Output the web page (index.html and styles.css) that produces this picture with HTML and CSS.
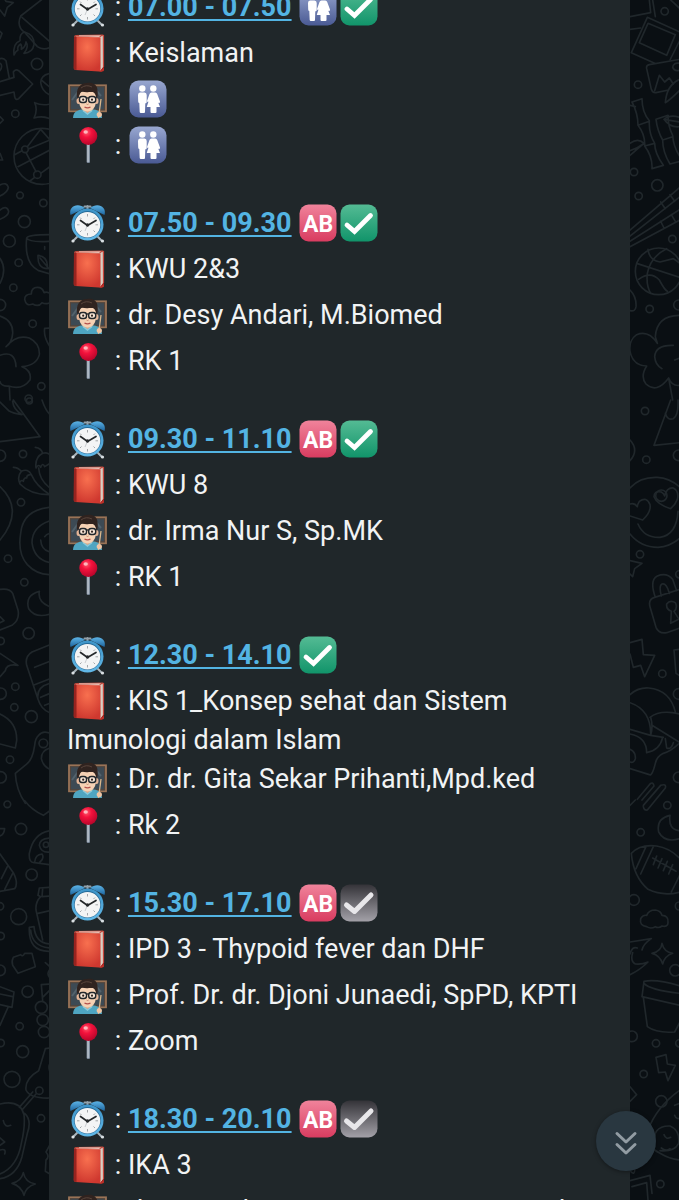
FILE: index.html
```html
<!DOCTYPE html>
<html lang="id">
<head>
  <meta charset="UTF-8">
  <title>Jadwal Kuliah</title>
  <meta name="viewport" content="width=device-width, initial-scale=1.0">
  <link rel="stylesheet" href="styles.css">
</head>
<body>
  <!-- emoji set -->
  <svg class="defs" aria-hidden="true">
    <defs>
      <linearGradient id="gGreen" x1="0" y1="0" x2="0" y2="1"><stop offset="0" stop-color="#54bb94"/><stop offset="1" stop-color="#11946a"/></linearGradient>
      <linearGradient id="gPink" x1="0" y1="0" x2="0" y2="1"><stop offset="0" stop-color="#f0839b"/><stop offset="1" stop-color="#d93c60"/></linearGradient>
      <linearGradient id="gGray" x1="0" y1="0" x2="0" y2="1"><stop offset="0" stop-color="#343338"/><stop offset="1" stop-color="#a3a1a8"/></linearGradient>
      <linearGradient id="gBlue" x1="0" y1="0" x2="0" y2="1"><stop offset="0" stop-color="#98a7d0"/><stop offset="1" stop-color="#4a5a94"/></linearGradient>
      <linearGradient id="gBell" x1="0" y1="0" x2="0" y2="1"><stop offset="0" stop-color="#5db4e6"/><stop offset="1" stop-color="#1d659f"/></linearGradient>
      <linearGradient id="gRing" x1="0" y1="0" x2="0" y2="1"><stop offset="0" stop-color="#3c93c8"/><stop offset="1" stop-color="#62b9e8"/></linearGradient>
      <radialGradient id="gBook" cx="0.5" cy="0.3" r="0.7"><stop offset="0" stop-color="#f8704f"/><stop offset="1" stop-color="#cf382f"/></radialGradient>
      <radialGradient id="gPin" cx="0.4" cy="0.3" r="0.7"><stop offset="0" stop-color="#ff5a6c"/><stop offset="0.4" stop-color="#f3123c"/><stop offset="1" stop-color="#b8052b"/></radialGradient>

      <symbol id="clock" viewBox="0 0 41 46">
        <path d="M10 37 L6 41 M31 37 L35 41" stroke="#a9b4bb" stroke-width="2" stroke-linecap="round"/>
        <circle cx="6" cy="41" r="1.6" fill="#d9dfe2"/><circle cx="35.500" cy="41" r="1.600" fill="#d9dfe2"/>
        <path d="M20.500 9 V6 M17.500 6.500 H23.500" stroke="#93a1aa" stroke-width="2" stroke-linecap="round"/>
        <path d="M3.500 15 C1 6 11 2 18 8 Z" fill="url(#gBell)"/>
        <path d="M37.500 15 C40 6 30 2 23 8 Z" fill="url(#gBell)"/>
        <circle cx="20.500" cy="24.500" r="16" fill="url(#gRing)"/>
        <circle cx="20.500" cy="24.500" r="13.400" fill="#256a98"/>
        <circle cx="20.500" cy="24.800" r="12.800" fill="#f3f4f5"/>
        <path d="M20.500 14 V16.500 M20.500 33 V35.500 M10 24.800 H12.500 M28.500 24.800 H31 M13 17.500 L14.500 19 M28 17.500 L26.500 19 M13 32 L14.500 30.500 M28 32 L26.500 30.500" stroke="#a4a7aa" stroke-width="1"/>
        <path d="M13.500 20.500 L20.500 25.500 L29 20.500" fill="none" stroke="#25282b" stroke-width="1.700" stroke-linecap="round"/>
        <path d="M20.500 25 L18 31" stroke="#c9ccd0" stroke-width="1"/>
        <circle cx="20.500" cy="25" r="1.700" fill="#25282b"/>
      </symbol>

      <symbol id="book" viewBox="0 0 41 46">
        <path d="M33 38 L37 36 V40 L33.500 42 Z" fill="#9f201c"/>
        <path d="M9 5 L36 5 L36 37 L33 41 L9 38 Z" fill="#e9dcd2"/>
        <path d="M34 7 L33.500 39 M35.500 6 L35 38" stroke="#b9a9a0" stroke-width="0.600"/>
        <path d="M7 7 Q7 5 9 5 L35.500 4.500 L37 5 L32.500 7.500 L10 6.500 Z" fill="#bd4a3d"/>
        <path d="M12 5.500 L34 5.500 L32 6.800 L12 6.300 Z" fill="#f3e6dc"/>
        <path d="M9 6.500 L33.500 7.500 V40.500 Q33.500 41.800 32 41.600 L8.500 40 Q7 39.800 7 38.500 L7 8 Q7 6.500 9 6.500 Z" fill="url(#gBook)"/>
        <path d="M7 7 L9.500 7 L9.500 40 L8 39.800 Q6.500 39.500 6.500 38 Z" fill="#97231f"/>
        <path d="M36.500 5 V37" stroke="#c8453b" stroke-width="1.200"/>
        <path d="M33 41.500 L36.800 38 V41 L33.500 42 Z" fill="#c33129"/>
      </symbol>

      <symbol id="teacher" viewBox="0 0 41 46">
        <rect x="2" y="9.300" width="37" height="26" fill="#3d4a54" stroke="#9a7356" stroke-width="1.800"/>
        <rect x="3.500" y="10.800" width="34" height="23" fill="none" stroke="#5d4433" stroke-width="0.800"/>
        <path d="M5 24 L13 13 M28 13 L34 20" stroke="#53626c" stroke-width="2"/>
        <path d="M6 42 C6 35 12 34 16 33 L25 33 C30 34 35 35 35 42 Z" fill="#4fa5c1"/>
        <path d="M15 32 L16 35 Q20.500 39 25 35 L26 32 Z" fill="#dba988"/>
        <path d="M16 34.500 L20.500 38 L25 34.500" fill="none" stroke="#89cadb" stroke-width="1.400"/>
        <ellipse cx="11.500" cy="25" rx="2" ry="3" fill="#e4b597"/><ellipse cx="29.500" cy="25" rx="2" ry="3" fill="#e4b597"/>
        <path d="M12 18 Q20 10 29 18 V26 Q28 35 20.500 35.500 Q13 35 12 26 Z" fill="#f5d1b4"/>
        <path d="M10.500 23 C8 13 13 7 20 7 C25 6 30 8 30.500 14 C31 18 30.500 21 30 23 L28.500 19 C27 15 25 16 22 16 C17 17 14 14 13 18 Z" fill="#30231f"/>
        <path d="M14 12 Q19 8 25 11" fill="none" stroke="#58443b" stroke-width="1"/>
        <g fill="#f7e5d6" stroke="#20262b" stroke-width="1.400"><rect x="12.500" y="20.500" width="7" height="6" rx="2.500"/><rect x="21.700" y="20.500" width="7" height="6" rx="2.500"/><path d="M19.500 22 H21.700"/></g>
        <circle cx="16.200" cy="23.700" r="1.100" fill="#30231f"/><circle cx="25" cy="23.700" r="1.100" fill="#30231f"/>
        <path d="M19.500 28 Q20.500 29 21.600 28" stroke="#c58a6e" stroke-width="1" fill="none"/>
        <path d="M17.500 31 Q20.500 32.800 23.500 31" fill="none" stroke="#b44f4b" stroke-width="1.300"/>
        <path d="M34 23 L31.500 42" stroke="#dab78d" stroke-width="1.300"/>
        <circle cx="32.300" cy="38.500" r="2.600" fill="#efc4a3"/>
      </symbol>

      <symbol id="pin" viewBox="0 0 41 46">
        <rect x="19.600" y="21" width="3.400" height="20" rx="1.300" fill="#7c8a9a"/>
        <rect x="20.400" y="22" width="1.300" height="18" rx="0.600" fill="#c5ccd6"/>
        <circle cx="21.300" cy="14" r="9" fill="url(#gPin)"/>
        <ellipse cx="18.700" cy="10" rx="2.200" ry="1.800" fill="#ffb7bd"/>
      </symbol>

      <symbol id="restroom" viewBox="0 0 41 46">
        <rect x="1.500" y="4.500" width="37" height="37" rx="9" fill="url(#gBlue)"/>
        <g fill="#fff">
          <circle cx="14.300" cy="12.500" r="3.200"/>
          <path d="M12 16.500 H16.500 Q18.700 16.500 18.700 19 V26 Q18.700 27.300 17.800 27.300 L17.300 27.300 L17 36 Q17 37 16 37 H12.800 Q11.800 37 11.700 36 L11.300 27 Q10.300 27 10.200 25.500 L10 19 Q10 16.500 12 16.500 Z"/>
          <circle cx="25.300" cy="12.500" r="3.200"/>
          <path d="M23.500 16.500 H27.200 Q28.700 16.500 29.200 18 L32 25.500 Q32.300 27 30.800 27 L30.200 26.500 L32 31 H28.500 V36 Q28.500 37 27.500 37 H23.500 Q22.500 37 22.500 36 V31 H18.700 L20.500 25.500 Q19.500 26.500 19 25 L21.500 18 Q22 16.500 23.500 16.500 Z"/>
        </g>
      </symbol>

      <symbol id="check" viewBox="0 0 41 46">
        <rect x="1.500" y="4.500" width="37" height="37" rx="9" fill="url(#gGreen)"/>
        <path d="M8 25 L15.500 31.500 L31.500 15.500" fill="none" stroke="#fff" stroke-width="4.800" stroke-linecap="round"/>
      </symbol>
      <symbol id="checkGray" viewBox="0 0 41 46">
        <rect x="1.500" y="4.500" width="37" height="37" rx="9" fill="url(#gGray)"/>
        <path d="M7.500 25 L15.500 31.500 L32 15" fill="none" stroke="#e8e7ea" stroke-width="5" stroke-linecap="round" stroke-linejoin="round"/>
      </symbol>
      <symbol id="ab" viewBox="0 0 41 46">
        <rect x="1.500" y="4.500" width="37" height="37" rx="9" fill="url(#gPink)"/>
        <text x="20" y="31.500" text-anchor="middle" class="ab-text">AB</text>
      </symbol>
    </defs>
  </svg>

  <main class="chat">
    <!-- wallpaper, left strip -->
    <svg class="wallpaper" viewBox="0 0 147 3600" aria-hidden="true">
      <path d="M0 30 L14 48 L22 22 L40 8 L18 4 L10 -10"/>
      <path d="M130 -5 L62 48 Q48 80 75 98 L112 140 Q130 152 150 142 M66 52 L150 125"/>
      <path d="M42 165 Q38 130 60 122 Q58 100 74 96 Q104 104 102 134 Q98 158 72 160 Q88 140 78 126 Q76 142 64 148 Q66 136 62 132 Q50 140 54 150 Q46 154 42 165 Z"/>
      <circle cx="111" cy="192" r="17"/><circle cx="46" cy="341" r="11"/>
      <path d="M150 220 Q122 225 122 248 Q126 275 150 285 M124 240 L150 262"/>
      <path d="M0 245 L42 232 L40 216 Q46 206 56 212 L98 252 L56 296 Q46 302 44 290 L42 276 L0 286 M28 236 L18 182 Q10 172 0 176 M0 190 Q10 196 0 212"/>
      <path d="M104 308 Q114 330 102 354 Q126 346 150 356 M104 308 Q126 318 150 312 M0 350 L10 360 L0 370 M0 460 L8 480 L0 480 M0 94 L6 100 L0 116"/>
      <circle cx="126" cy="469" r="84"/><circle cx="75" cy="448" r="10"/><circle cx="112" cy="524" r="11"/>
      <path d="M82 440 L122 388 M85 447 L150 420 M66 452 L44 464 M78 458 L108 515 M54 500 L150 450 M122 520 L150 500 M104 532 L90 543 M122 388 L150 420"/>
      <path d="M0 555 Q20 545 25 562 Q24 576 0 588 M0 630 Q20 614 26 634 Q26 648 0 658"/>
      <circle cx="60" cy="586" r="10"/><circle cx="130" cy="609" r="11"/><circle cx="73" cy="665" r="18"/><circle cx="28" cy="723" r="18"/><circle cx="56" cy="788" r="11"/><circle cx="40" cy="863" r="11"/><circle cx="0" cy="915" r="17"/><circle cx="98" cy="971" r="11"/><circle cx="124" cy="1159" r="11"/><circle cx="86" cy="1196" r="11"/>
      <path d="M150 704 Q84 704 80 714 Q86 728 150 724 M80 714 Q72 790 116 812 L150 822 M114 766 Q146 770 142 806 Q112 806 114 766 M120 774 L150 810 M134 740 V748"/>
      <path d="M0 775 Q22 808 0 850"/>
      <path d="M150 880 Q140 874 132 878 Q128 862 112 862 Q94 862 94 882 Q74 882 74 898 Q78 920 98 912 Q116 922 126 908 Q136 914 150 908"/>
      <path d="M0 948 Q40 962 38 1000 Q36 1028 18 1040 Q50 1002 88 1014 Q120 1030 118 1064 Q110 1096 66 1100 Q96 1112 90 1140 Q66 1172 26 1158 Q4 1160 0 1145 M0 1066 Q46 1050 48 1100 M28 1160 L30 1200 M134 985 Q130 1010 150 1040 M150 984 L134 985"/>

      <path d="M0 1325 L120 1310 L40 1200 M0 1206 L26 1232 Q40 1240 66 1244 Q40 1228 38 1204 M126 1200 Q136 1230 150 1244"/>
      <circle cx="88" cy="1203" r="9"/><circle cx="0" cy="1367" r="17"/><circle cx="69" cy="1362" r="11"/><circle cx="63" cy="1507" r="11"/><circle cx="24" cy="1676" r="11"/><circle cx="73" cy="1747" r="11"/><circle cx="86" cy="1900" r="17"/><circle cx="2" cy="1923" r="11"/><circle cx="46" cy="2060" r="11"/><circle cx="2" cy="2081" r="17"/><circle cx="43" cy="2122" r="11"/><circle cx="94" cy="2150" r="18"/><circle cx="30" cy="2279" r="11"/><circle cx="2" cy="2332" r="17"/>
      <path d="M40 1402 Q54 1402 64 1414 Q84 1404 94 1424 Q110 1460 150 1484 M64 1414 Q50 1430 60 1452 Q90 1484 150 1484 M60 1446 Q66 1438 70 1444 Q72 1432 80 1434 Q80 1424 92 1424 M106 1342 Q124 1344 128 1360 Q104 1372 108 1404 Q116 1390 122 1402 Q128 1386 134 1400 L150 1390 M116 1404 Q118 1440 150 1464 M128 1360 Q140 1356 150 1364"/>
      <path d="M0 1460 Q74 1530 0 1620"/>
      <path d="M150 1522 Q68 1530 62 1600 Q52 1660 82 1694 Q110 1724 150 1724 M150 1562 Q96 1580 96 1628 Q102 1678 150 1688 M134 1610 Q140 1602 150 1600 M122 1620 Q124 1650 150 1656"/>
      <path d="M118 1774 Q74 1786 86 1826 Q106 1856 150 1842 M118 1774 Q112 1806 150 1820"/>
      <path d="M0 1768 Q30 1764 38 1780 L54 1830 Q60 1860 36 1876 L0 1890 M0 1850 L12 1862 L0 1868 M0 1960 L54 1996 Q20 1990 16 2012 L0 2030"/>
      <path d="M150 1934 L96 1956 Q74 1970 80 1996 L114 2098 Q124 2130 150 2138 M104 2002 L150 1984 M100 2056 L150 2036 M150 2050 Q108 2060 114 2098 M122 2092 L150 2080 M134 2116 L150 2110"/>
      <path d="M0 2142 Q52 2166 50 2222 L46 2244 L0 2232"/>
      <path d="M150 2200 Q128 2190 116 2206 Q106 2214 104 2236 Q98 2280 78 2294 L46 2320 Q48 2370 76 2410 M150 2244 Q124 2250 124 2276 Q130 2300 150 2308"/><circle cx="130" cy="2230" r="13"/>

      <circle cx="22" cy="2413" r="10"/><circle cx="63" cy="2487" r="17"/><circle cx="95" cy="2624" r="17"/><circle cx="0" cy="2719" r="11"/><circle cx="56" cy="2750" r="24"/><circle cx="2" cy="2808" r="11"/><circle cx="0" cy="2911" r="16"/><circle cx="83" cy="2975" r="17"/><circle cx="59" cy="3079" r="11"/><circle cx="2" cy="3129" r="11"/><circle cx="68" cy="3155" r="18"/><circle cx="36" cy="3238" r="24"/><circle cx="123" cy="3355" r="11"/>
      <path d="M74 2402 Q96 2430 130 2446 L150 2432 M0 2486 L14 2486 Q12 2504 0 2508"/>
      <path d="M150 2492 Q100 2500 88 2560 Q86 2590 104 2588 L150 2594 M150 2514 Q118 2516 118 2536 Q124 2560 150 2556 M104 2586 Q106 2564 126 2562 Q134 2574 120 2586"/>
      <circle cx="138" cy="2534" r="8"/>
      <path d="M0 2562 L40 2618 Q56 2650 44 2666 L0 2674 M22 2600 L4 2636 M38 2620 L14 2668"/>
      <path d="M150 2662 L118 2664 L114 2686 L122 2690 Q106 2706 108 2730 L128 2820 M128 2666 L126 2690 L150 2688 M114 2740 L150 2732 M88 2782 L102 2780 Q106 2830 150 2832 M88 2782 Q84 2856 150 2854 M92 2790 Q96 2840 150 2844"/>
      <path d="M40 2872 L62 2864 Q68 2872 74 2860 L96 2860 L106 2900 L54 2920 L38 2896 Q34 2882 40 2872 Z"/>
      <path d="M0 2960 L42 2976 L36 3022 L0 3014 M0 2982 L38 2990 M24 3022 L0 3076"/>
      <circle cx="124" cy="3022" r="18"/><circle cx="128" cy="3060" r="17"/><circle cx="132" cy="3096" r="17"/>
      <path d="M150 2952 L124 2954 L128 3002 M130 2990 L150 2970 M136 2888 L150 2900 M150 2908 Q138 2920 150 2934 M150 3144 L136 3146 L116 3212 Q74 3236 78 3270 Q90 3296 150 3294 M150 3190 Q144 3200 150 3216"/>
      <circle cx="118" cy="3272" r="11"/>
      <path d="M108 3282 L66 3330 M98 3276 L58 3322 M0 3312 Q60 3298 72 3344 Q76 3380 64 3430 Q52 3500 0 3522 M74 3340 Q96 3360 82 3400 L66 3470 Q50 3528 0 3536 M10 3362 Q14 3384 32 3376 M0 3450 Q20 3444 14 3462 M0 3414 L14 3426 L0 3436"/>
      <path d="M70 3518 Q76 3548 106 3552 Q78 3560 72 3586 Q64 3558 36 3550 Q64 3544 70 3518 Z M150 3434 L138 3456 Q150 3470 138 3480 L136 3514 L150 3522"/>
    </svg>

    <section class="bubble">
      <p>
        <svg class="emoji" role="img" aria-label="Jam"><use href="#clock"/></svg> : <a href="#">07.00 - 07.50</a> <svg class="emoji"><use href="#restroom"/></svg><svg class="emoji"><use href="#check"/></svg><br>
        <svg class="emoji"><use href="#book"/></svg> : Keislaman<br>
        <svg class="emoji"><use href="#teacher"/></svg> : <svg class="emoji"><use href="#restroom"/></svg><br>
        <svg class="emoji"><use href="#pin"/></svg> : <svg class="emoji"><use href="#restroom"/></svg>
      </p>
      <p>
        <svg class="emoji"><use href="#clock"/></svg> : <a href="#">07.50 - 09.30</a> <svg class="emoji"><use href="#ab"/></svg><svg class="emoji"><use href="#check"/></svg><br>
        <svg class="emoji"><use href="#book"/></svg> : KWU 2&amp;3<br>
        <svg class="emoji"><use href="#teacher"/></svg> : dr. Desy Andari, M.Biomed<br>
        <svg class="emoji"><use href="#pin"/></svg> : RK 1
      </p>
      <p>
        <svg class="emoji"><use href="#clock"/></svg> : <a href="#">09.30 - 11.10</a> <svg class="emoji"><use href="#ab"/></svg><svg class="emoji"><use href="#check"/></svg><br>
        <svg class="emoji"><use href="#book"/></svg> : KWU 8<br>
        <svg class="emoji"><use href="#teacher"/></svg> : dr. Irma Nur S, Sp.MK<br>
        <svg class="emoji"><use href="#pin"/></svg> : RK 1
      </p>
      <p>
        <svg class="emoji"><use href="#clock"/></svg> : <a href="#">12.30 - 14.10</a> <svg class="emoji"><use href="#check"/></svg><br>
        <svg class="emoji"><use href="#book"/></svg> : KIS 1_Konsep sehat dan Sistem Imunologi dalam Islam<br>
        <svg class="emoji"><use href="#teacher"/></svg> : Dr. dr. Gita Sekar Prihanti,Mpd.ked<br>
        <svg class="emoji"><use href="#pin"/></svg> : Rk 2
      </p>
      <p>
        <svg class="emoji"><use href="#clock"/></svg> : <a href="#">15.30 - 17.10</a> <svg class="emoji"><use href="#ab"/></svg><svg class="emoji"><use href="#checkGray"/></svg><br>
        <svg class="emoji"><use href="#book"/></svg> : IPD 3 - Thypoid fever dan DHF<br>
        <svg class="emoji"><use href="#teacher"/></svg> : Prof. Dr. dr. Djoni Junaedi, SpPD, KPTI<br>
        <svg class="emoji"><use href="#pin"/></svg> : Zoom
      </p>
      <p>
        <svg class="emoji"><use href="#clock"/></svg> : <a href="#">18.30 - 20.10</a> <svg class="emoji"><use href="#ab"/></svg><svg class="emoji"><use href="#checkGray"/></svg><br>
        <svg class="emoji"><use href="#book"/></svg> : IKA 3<br>
        <svg class="emoji"><use href="#teacher"/></svg> : dr. Husnul Asarianti, Sp.A, M.Biomed
      </p>
    </section>

    <!-- wallpaper, right strip -->
    <svg class="wallpaper" viewBox="30 0 147 3600" aria-hidden="true">
      <path d="M30 50 L92 38 L88 0 M98 0 L106 50 M152 0 L180 26 M30 88 L62 84"/>
      <path d="M82 52 L180 96 M82 52 L34 158 L104 190 M180 120 L150 180 M84 70 L166 104 L140 166 L58 128 Z"/>
      <path d="M180 178 L88 194 Q78 196 80 206 L94 268 Q98 280 108 278 L146 270 M104 272 L118 226 L134 246 L148 234 L160 252 M180 190 Q160 186 158 202 Q164 216 180 210 M180 238 Q140 254 136 308 Q150 300 180 270"/>
      <circle cx="134" cy="34" r="11"/><circle cx="54" cy="254" r="11"/><circle cx="42" cy="516" r="11"/><circle cx="112" cy="556" r="17"/><circle cx="56" cy="588" r="11"/><circle cx="157" cy="717" r="11"/><circle cx="89" cy="927" r="11"/><circle cx="176" cy="915" r="15"/>
      <path d="M36 306 L66 296 Q66 336 88 362 Q86 400 104 430 Q104 460 130 496 L96 506 Q98 470 74 438 Q76 404 54 376 Q54 340 36 306 M54 376 L88 364 M74 438 L104 430 M30 316 L46 320 M30 430 Q54 412 72 430 L30 466 M30 452 Q50 446 72 430 M108 358 L144 346 Q144 380 158 406 Q160 440 180 470 M108 358 Q112 392 128 420 Q128 456 150 492 L180 484 M128 420 L158 410 M180 352 Q150 342 132 358 Q150 384 180 380 M132 358 L180 366"/>
      <path d="M30 690 L180 562 M30 708 L180 590 M30 724 L180 628 M30 740 L180 660 M122 606 L136 626 M150 584 L164 604 M122 664 L132 684 M154 644 L166 664"/>
      <circle cx="116" cy="814" r="70"/>
      <path d="M50 790 L180 832 M84 748 Q88 782 120 786 L160 776 L180 790 M140 746 Q92 770 82 820 Q78 856 92 880 M56 838 Q92 812 118 840 Q134 870 142 874"/>
      <path d="M30 870 Q50 890 48 920 Q46 936 30 932"/>
      <path d="M180 946 Q110 946 106 1010 L112 1030 Q86 990 50 1004 Q26 1020 30 1054 Q38 1096 80 1098 Q60 1130 78 1152 Q110 1182 146 1134 L158 1200 M146 1134 Q156 1160 180 1156 M160 1036 Q106 1034 104 1070 Q106 1096 126 1106 M164 1080 L180 1074"/>

      <path d="M152 1200 L102 1336 L180 1328 M136 1240 Q142 1262 160 1256 Q176 1246 174 1200 M30 1320 Q58 1350 30 1382"/>
      <circle cx="75" cy="1233" r="11"/><circle cx="79" cy="1379" r="11"/><circle cx="176" cy="1366" r="16"/><circle cx="124" cy="1487" r="17"/><circle cx="60" cy="1663" r="11"/><circle cx="178" cy="1723" r="11"/><circle cx="127" cy="2021" r="11" transform="translate(0 0)"/><circle cx="176" cy="2082" r="16"/><circle cx="176" cy="2332" r="16"/>
      <path d="M30 1464 Q60 1430 112 1432 Q150 1434 180 1462 M30 1602 Q62 1642 114 1642 Q150 1640 180 1614"/>
      <path d="M152 1526 Q110 1512 102 1490 Q102 1472 124 1476 Q132 1480 134 1488 Q140 1462 160 1464 Q178 1474 172 1498 Q166 1514 152 1526 Z M68 1560 L30 1548 M68 1560 Q94 1536 90 1514 Q80 1488 58 1504 Q52 1514 52 1520 Q44 1508 30 1512 M54 1572 Q72 1614 120 1612 Q170 1604 174 1534"/>
      <path d="M30 1682 L66 1690 L44 1706 L38 1730 L30 1722"/>
      <path d="M106 1792 Q88 1740 112 1728 Q140 1716 158 1738 L170 1772 M124 1788 Q116 1756 126 1752 Q140 1748 148 1780 M180 1768 L104 1792 Q84 1798 90 1820 L108 1882 Q116 1902 140 1898 L180 1884 M180 1856 L152 1870 L154 1834 Q138 1828 140 1812 Q150 1798 166 1808 Q174 1824 162 1834 L176 1856"/>
      <path d="M30 1928 L66 1918 L70 1964 L104 1966 L74 2030 L62 1996 L40 2002 L30 1962 M180 1948 L162 1950 L168 2020 L180 2028"/>
      <path d="M30 2084 Q54 2062 86 2064 Q150 2070 166 2136 M30 2108 Q94 2130 92 2206 L30 2188 M90 2152 Q120 2128 180 2142 M92 2206 Q100 2180 92 2152 M92 2206 L130 2212 M96 2176 L180 2228 M30 2202 Q80 2212 80 2258 Q120 2250 128 2212 M136 2216 L140 2244 Q154 2250 160 2228 M180 2228 Q150 2256 130 2260 Q110 2270 106 2290 Q96 2330 88 2324 L30 2306 M30 2248 Q48 2256 46 2276 Q42 2290 30 2286"/>
      <path d="M52 2398 L90 2352 Q100 2344 102 2358 L66 2400 M70 2416 L122 2356 Q140 2350 136 2364 L82 2430 Q72 2432 70 2420 M30 2416 L46 2400"/>

      <circle cx="142" cy="2416" r="11"/><circle cx="62" cy="2497" r="11"/><circle cx="42" cy="2700" r="16"/><circle cx="178" cy="2718" r="12"/><circle cx="166" cy="2911" r="17"/><circle cx="36" cy="3109" r="16"/><circle cx="108" cy="3130" r="11"/><circle cx="178" cy="3130" r="11"/><circle cx="71" cy="3222" r="11"/><circle cx="124" cy="3304" r="17"/><circle cx="121" cy="3552" r="11"/>
      <path d="M150 2446 Q108 2456 116 2496 Q134 2530 180 2516 M150 2446 Q144 2490 180 2492"/>
      <path d="M34 2560 Q60 2532 110 2538 Q150 2544 180 2576 M34 2560 Q40 2630 84 2668 Q130 2690 180 2676 M78 2540 L48 2606 M100 2540 L62 2622 M180 2624 L154 2676 M98 2574 L168 2614 M110 2568 L100 2594 M126 2576 L114 2604 M142 2584 L130 2612 M158 2594 L146 2622"/>
      <path d="M80 2780 Q58 2778 62 2756 Q68 2744 80 2746 Q86 2730 106 2730 Q122 2732 126 2746 Q146 2746 144 2768 Q144 2782 126 2778 Q116 2786 106 2780 Q92 2788 80 2780 Z"/>
      <path d="M30 2826 L94 2816 Q70 2832 66 2850 M30 2862 Q36 2838 52 2844 M38 2858 Q30 2884 46 2892 Q66 2894 84 2886 Q60 2910 30 2924 M126 2830 Q132 2856 158 2860 Q134 2868 128 2892 Q120 2866 96 2860 Q124 2854 126 2830 Z"/>
      <path d="M72 2944 Q110 2936 180 2958 M72 2944 L66 2990 L180 3016 M72 2950 Q90 2970 180 2980 M70 2992 L82 3080 Q110 3100 164 3096 L180 3066"/>
      <path d="M108 3172 L138 3164 L142 3192 L166 3196 L144 3242 L136 3216 L116 3218 Z M30 3260 L50 3284 L30 3304"/>
      <path d="M180 3270 Q110 3320 84 3390 Q76 3440 120 3460 Q150 3478 180 3480 M104 3440 Q94 3376 150 3378 Q180 3390 176 3430 Q164 3456 120 3452 M132 3404 Q138 3420 152 3412 M124 3444 Q138 3456 150 3446 M164 3346 Q170 3360 180 3354 M164 3316 L180 3310"/>
      <path d="M30 3542 L90 3526 L96 3580 M36 3560 L80 3548 L84 3600 M50 3408 Q60 3396 72 3404 M30 3512 Q46 3530 44 3504"/>
    </svg>

    <button class="scroll-down" type="button" aria-label="Gulir ke bawah">
      <svg viewBox="0 0 24 26" aria-hidden="true"><path d="M3 3.500 L12 12 L21 3.500 M3 14.500 L12 23 L21 14.500"/></svg>
    </button>
  </main>
</body>
</html>
```
FILE: styles.css
```css
* { box-sizing: border-box; }
body { margin: 0; background: #0a0f13; font-family: Roboto, "Noto Sans", sans-serif; }
.defs { position: absolute; width: 0; height: 0; }

.chat { display: grid; grid-template-columns: 49px 1fr 49px; height: 100vh; overflow: hidden; }
.wallpaper { width: 49px; height: 1200px; fill: none; stroke: #20272b; stroke-width: 5; stroke-linecap: round; stroke-linejoin: round; }

/* message is scrolled a little past its first line */
.bubble { margin-top: -16px; padding: 0 18px; background: #20272a; color: #f1f3f4; font-size: 27px; line-height: 32px; }
.bubble p { margin: 0 0 32px; }
.bubble a { color: #53b4e3; font-weight: 700; text-decoration: underline; text-decoration-thickness: 2px; text-underline-offset: 3px; text-decoration-skip-ink: none; }

.emoji { width: 41px; height: 46px; vertical-align: -14px; }
.ab-text { font-family: Roboto, sans-serif; font-size: 23px; font-weight: 700; fill: #fff; }

.scroll-down { position: fixed; right: 23px; bottom: 29px; display: flex; align-items: center; justify-content: center; width: 60px; height: 60px; padding: 4px 0 0; border: none; border-radius: 50%; background: #293740; box-shadow: 0 1px 4px rgba(0,0,0,0.4); }
.scroll-down svg { width: 24px; height: 26px; fill: none; stroke: #929ca3; stroke-width: 3; stroke-linecap: round; stroke-linejoin: round; }
```
